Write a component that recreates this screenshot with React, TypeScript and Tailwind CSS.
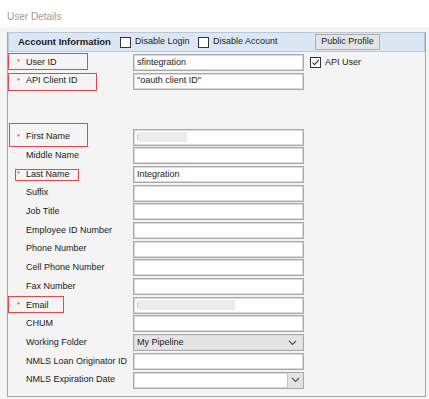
import { ReactNode } from "react";

type Row = {
  label?: string;
  required?: boolean;
  kind?: "text" | "select" | "date" | "blank";
  value?: string;
  blur?: number;
};

const rows: Row[] = [
  { label: "User ID", required: true, value: "sfintegration" },
  { label: "API Client ID", required: true, value: "\"oauth client ID\"" },
  { kind: "blank" },
  { kind: "blank" },
  { label: "First Name", required: true, blur: 50 },
  { label: "Middle Name" },
  { label: "Last Name", required: true, value: "Integration" },
  { label: "Suffix" },
  { label: "Job Title" },
  { label: "Employee ID Number" },
  { label: "Phone Number" },
  { label: "Cell Phone Number" },
  { label: "Fax Number" },
  { label: "Email", required: true, blur: 98 },
  { label: "CHUM" },
  { label: "Working Folder", kind: "select", value: "My Pipeline" },
  { label: "NMLS Loan Originator ID" },
  { label: "NMLS Expiration Date", kind: "date" },
];

function Chevron() {
  return (
    <svg width="9" height="6" viewBox="0 0 9 6" className="text-[#555]">
      <path d="M1 1l3.5 3.5L8 1" fill="none" stroke="currentColor" strokeWidth="1.2" />
    </svg>
  );
}

function Checkbox({ checked }: { checked?: boolean }) {
  return (
    <span className="flex h-[11px] w-[11px] items-center justify-center border border-[#333] bg-white">
      {checked && (
        <svg width="9" height="9" viewBox="0 0 9 9">
          <path d="M1.5 4.5l2 2.2L7.8 1.8" fill="none" stroke="#333" strokeWidth="1.1" />
        </svg>
      )}
    </span>
  );
}

function Field({ row }: { row: Row }) {
  const base =
    "flex h-[17px] w-[171px] items-center border border-[#a8a8a8] shadow-[inset_0_0_0_1px_#dadada]";
  if (row.kind === "select") {
    return (
      <div className={`${base} justify-between bg-[#e5e5e5] pl-[3px] pr-[6px]`}>
        <span>{row.value}</span>
        <Chevron />
      </div>
    );
  }
  if (row.kind === "date") {
    return (
      <div className={`${base} justify-end bg-white`}>
        <span className="flex h-full w-[16px] items-center justify-center border-l border-[#c4c4c4] bg-[#e3e3e3]">
          <Chevron />
        </span>
      </div>
    );
  }
  return (
    <div className={`${base} bg-white pl-[3px]`}>
      {row.blur ? (
        <span className="flex h-[10px] items-center bg-[#ececec]" style={{ width: row.blur }}>
          <span className="h-[6px] w-px bg-[#d9c9a5]" />
        </span>
      ) : (
        <span>{row.value}</span>
      )}
    </div>
  );
}

function RedBox({ className }: { className: string }) {
  return <div className={`pointer-events-none absolute border-[1.5px] border-[#e5484d] ${className}`} />;
}

function HeaderItem({ children }: { children: ReactNode }) {
  return <span className="flex items-center gap-[4px]">{children}</span>;
}

export default function App() {
  return (
    <div
      className="relative flex h-[399px] w-[429px] flex-col overflow-hidden bg-white text-[9px] text-[#1a1a1a]"
      style={{ fontFamily: "'Liberation Sans', Arial, sans-serif" }}
    >
      <div className="h-[27px] pl-[7px] pt-[9px] text-[10px] text-[#9a9a9a]">User Details</div>
      <div className="flex flex-1 bg-[#f4f4f4] pl-[7px] pr-[3px] pt-[5px]">
        <div className="flex h-[365px] flex-1 flex-col border-x border-b border-[#a5a5a5]">
          <div className="flex h-[20px] items-center border border-[#b7c8dd] bg-[#dce7f5] pl-[9px]">
            <span className="w-[102px] text-[9.5px] font-bold">Account Information</span>
            <HeaderItem>
              <Checkbox />
              <span className="w-[63px]">Disable Login</span>
            </HeaderItem>
            <HeaderItem>
              <Checkbox />
              <span className="w-[102px]">Disable Account</span>
            </HeaderItem>
            <span className="flex h-[16px] w-[65px] items-center justify-center border border-[#acacac] bg-[#e4e4e4]">
              Public Profile
            </span>
          </div>
          <div className="flex flex-col pt-[1px]">
            {rows.map((row, i) => (
              <div key={i} className="flex h-[18.7px] items-center">
                {row.kind === "blank" ? null : (
                  <>
                    <span className="w-[10px] pl-[9px] text-[8px] leading-none text-[#e0393e]">
                      {row.required ? "*" : ""}
                    </span>
                    <span className="w-[115px] pl-[8px]">{row.label}</span>
                    <Field row={row} />
                    {i === 0 && (
                      <span className="ml-[6px] flex items-center gap-[4px]">
                        <Checkbox checked />
                        <span>API User</span>
                      </span>
                    )}
                  </>
                )}
              </div>
            ))}
          </div>
        </div>
      </div>
      <RedBox className="left-[8px] top-[53px] h-[17px] w-[80px]" />
      <RedBox className="left-[8px] top-[73px] h-[18px] w-[89px]" />
      <RedBox className="left-[9px] top-[123px] h-[24px] w-[79px]" />
      <RedBox className="left-[15px] top-[169px] h-[12px] w-[64px]" />
      <RedBox className="left-[8px] top-[296px] h-[17px] w-[56px]" />
    </div>
  );
}
